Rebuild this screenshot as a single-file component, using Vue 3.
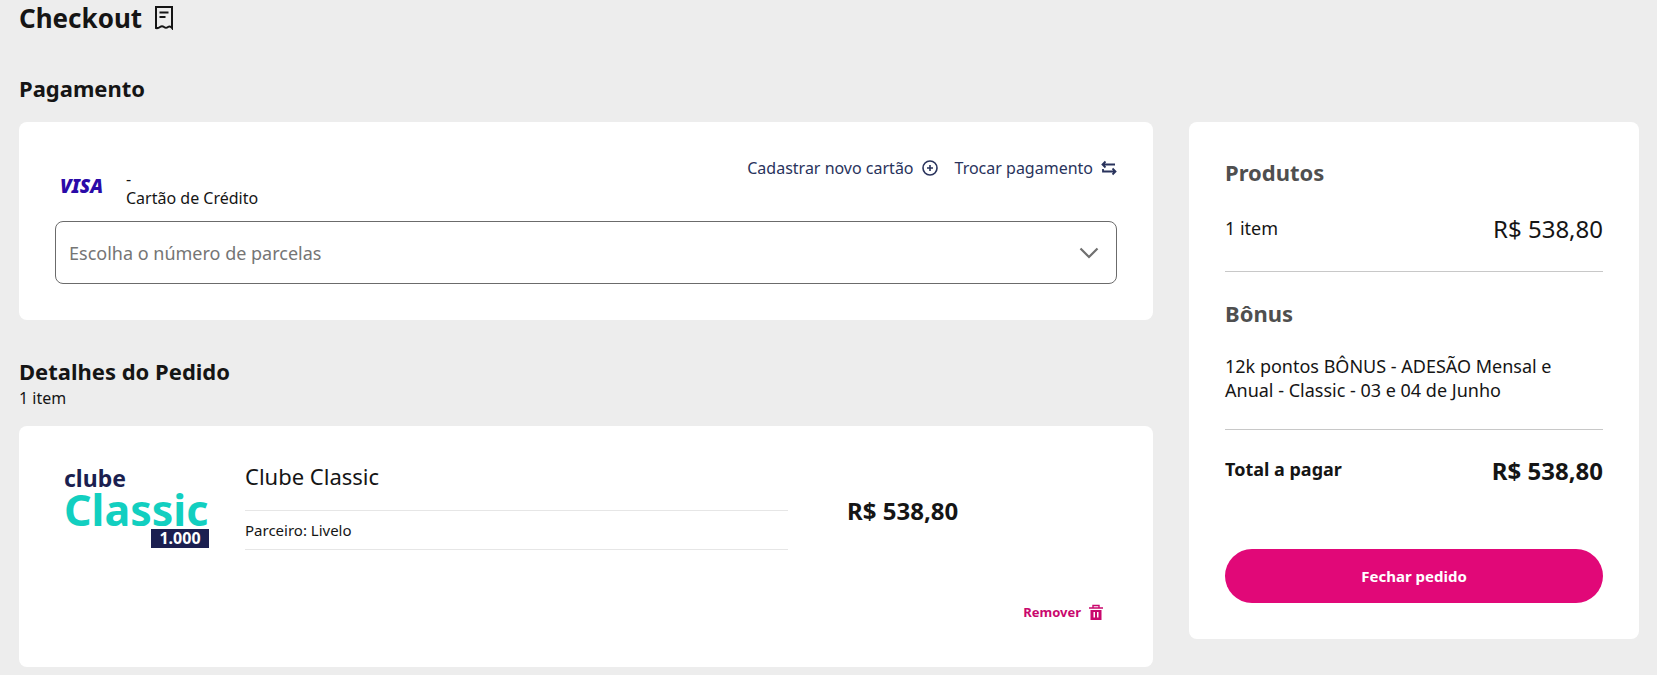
<script setup>
import { ref } from 'vue'

const parcelas = ref('')
const price = 'R$ 538,80'
const opcoes = ['1x de R$ 538,80', '2x de R$ 269,40', '3x de R$ 179,60']
</script>

<template>
  <div class="page">
    <header class="page-header">
      <h1>Checkout</h1>
      <svg width="20" height="24" viewBox="0 0 20 24" fill="none" stroke="currentColor" stroke-width="2" aria-hidden="true">
        <path d="M2 22V1h16v21q-2-2.500-4-1t-4 0-4 0-4 1z" />
        <path d="M5.500 6.500h9M5.500 11h6" />
      </svg>
    </header>

    <div class="columns">
      <h2 class="payment-title">Pagamento</h2>

      <main>
        <section class="card payment">
          <div class="payment-top">
            <div class="method">
              <span class="visa">VISA</span>
              <div class="method-text">
                <div>-</div>
                <div>Cartão de Crédito</div>
              </div>
            </div>
            <nav class="actions">
              <a href="#">
                Cadastrar novo cartão
                <svg width="16" height="16" viewBox="0 0 16 16" fill="none" stroke="currentColor" stroke-width="1.600" aria-hidden="true">
                  <circle cx="8" cy="8" r="7" />
                  <path d="M8 5v6M5 8h6" />
                </svg>
              </a>
              <a href="#">
                Trocar pagamento
                <svg width="16" height="16" viewBox="0 0 16 16" fill="none" stroke="currentColor" stroke-width="1.800" aria-hidden="true">
                  <path d="M4.500 1.500L1.500 4.500l3 3M1.500 4.500H14M11.500 8.500l3 3-3 3M14.500 11.500H2V9" />
                </svg>
              </a>
            </nav>
          </div>
          <div class="select-box">
            <select v-model="parcelas" aria-label="Número de parcelas">
              <option value="" disabled>Escolha o número de parcelas</option>
              <option v-for="o in opcoes" :key="o" :value="o">{{ o }}</option>
            </select>
            <svg width="20" height="12" viewBox="0 0 20 12" fill="none" stroke="currentColor" stroke-width="2.200" aria-hidden="true">
              <path d="M1.500 1.500l8.500 8.500 8.500-8.500" />
            </svg>
          </div>
        </section>

        <h2>Detalhes do Pedido</h2>
        <p class="count">1 item</p>

        <section class="card product">
          <div class="club-logo">
            <span class="club-top">clube</span>
            <span class="club-name">Classic</span>
            <span class="club-points">1.000</span>
          </div>
          <div class="product-info">
            <h3>Clube Classic</h3>
            <p>Parceiro: Livelo</p>
          </div>
          <strong class="product-price">{{ price }}</strong>
          <button type="button" class="remove">
            Remover
            <svg width="14" height="16" viewBox="0 0 14 16" aria-hidden="true">
              <path d="M4 4V1.500h6V4M0 4h14" fill="none" stroke="currentColor" stroke-width="1.400" />
              <path fill="currentColor" fill-rule="evenodd" d="M1.500 6h11v10h-11zM4.500 8v5.500h1.500V8zM8 8v5.500h1.500V8z" />
            </svg>
          </button>
        </section>
      </main>

      <aside class="card summary">
        <h3>Produtos</h3>
        <div class="row">
          <span>1 item</span>
          <span class="amount">{{ price }}</span>
        </div>
        <hr />
        <h3>Bônus</h3>
        <p>12k pontos BÔNUS - ADESÃO Mensal e Anual - Classic - 03 e 04 de Junho</p>
        <hr />
        <div class="row total">
          <span>Total a pagar</span>
          <span class="amount">{{ price }}</span>
        </div>
        <button type="button" class="submit">Fechar pedido</button>
      </aside>
    </div>
  </div>
</template>

<style>
body {
  background: #ededed;
}
</style>

<style scoped>
.page {
  padding: 0 18px 8px 19px;
  font-family: "Noto Sans", "Open Sans", sans-serif;
  font-size: 16px;
  color: #151515;
}
h1, h2, h3, p {
  margin: 0;
}
.page-header {
  display: flex;
  align-items: center;
  gap: 12px;
  height: 36px;
}
h1 {
  font-size: 26px;
  line-height: 36px;
}
h2 {
  font-size: 22px;
  line-height: 30px;
}
.columns {
  display: grid;
  grid-template-columns: minmax(0, 1fr) 450px;
  column-gap: 36px;
  align-items: start;
  padding-top: 37px;
}
.payment-title {
  grid-column: 1 / -1;
  margin-bottom: 19px;
}
.card {
  background: #fff;
  border-radius: 8px;
  padding: 36px;
}
.payment {
  margin-bottom: 36px;
}
.payment-top {
  display: flex;
  justify-content: space-between;
  align-items: flex-start;
}
.method {
  display: flex;
  gap: 24px;
  padding: 12px 0 13px 5px;
}
.visa {
  width: 42px;
  font-size: 19px;
  line-height: 32px;
  font-weight: 900;
  font-style: italic;
  color: #2a0aa8;
}
.method-text {
  line-height: 19px;
}
.actions {
  display: flex;
  gap: 17px;
}
.actions a {
  display: flex;
  align-items: center;
  gap: 8px;
  line-height: 20px;
  color: #29335c;
  text-decoration: none;
}
.select-box {
  position: relative;
}
.select-box select {
  display: block;
  width: 100%;
  height: 63px;
  padding: 0 48px 0 13px;
  border: 1px solid #6b6b6b;
  border-radius: 8px;
  background: #fff;
  appearance: none;
  font-family: inherit;
  font-size: 18px;
  color: #757575;
}
.select-box svg {
  position: absolute;
  right: 18px;
  top: 26px;
  color: #707070;
  pointer-events: none;
}
.count {
  line-height: 24px;
  margin-bottom: 16px;
}
.product {
  display: grid;
  grid-template-columns: 145px minmax(0, 579fr) minmax(0, 317fr);
  grid-template-rows: auto auto;
  padding: 36px 48px 36px 45px;
}
.club-logo {
  display: flex;
  flex-direction: column;
  align-items: flex-start;
  padding-top: 4px;
  font-weight: 700;
  color: #1b1f50;
}
.club-top {
  font-size: 23px;
  line-height: 24px;
}
.club-name {
  font-size: 43px;
  line-height: 39px;
  color: #12cfc0;
}
.club-points {
  align-self: flex-end;
  width: 58px;
  font-size: 16px;
  line-height: 19px;
  text-align: center;
  color: #fff;
  background: #1b1f50;
}
.product-info {
  margin-left: 36px;
}
.product-info h3 {
  font-size: 22px;
  line-height: 28px;
  font-weight: 400;
  padding-bottom: 20px;
  border-bottom: 1px solid #e6e6e6;
}
.product-info p {
  font-size: 15px;
  line-height: 38px;
  border-bottom: 1px solid #e6e6e6;
}
.product-price {
  margin-left: 59px;
  font-size: 24px;
  line-height: 30px;
  padding-top: 34px;
}
.remove {
  grid-column: 3;
  justify-self: end;
  display: flex;
  align-items: center;
  gap: 8px;
  margin: 52px 2px 9px 0;
  padding: 0;
  border: 0;
  background: none;
  font-family: inherit;
  font-size: 13px;
  line-height: 20px;
  font-weight: 700;
  color: #c9086e;
}
.summary {
  font-size: 18px;
}
.summary h3 {
  font-size: 22px;
  line-height: 28px;
  font-weight: 700;
  color: #4f4f4f;
  margin-bottom: 27px;
}
.summary p {
  line-height: 24px;
}
.summary hr {
  height: 1px;
  margin: 27px 0;
  border: 0;
  background: #c8c8c8;
}
.row {
  display: flex;
  justify-content: space-between;
  align-items: flex-start;
  line-height: 31px;
}
.amount {
  font-size: 24px;
}
.total {
  font-weight: 700;
  line-height: 24px;
  margin-bottom: 64px;
}
.total .amount {
  line-height: 28px;
}
.submit {
  display: block;
  width: 100%;
  height: 54px;
  border: 0;
  border-radius: 27px;
  background: #e10878;
  font-family: inherit;
  font-size: 15px;
  font-weight: 700;
  color: #fff;
}
</style>
